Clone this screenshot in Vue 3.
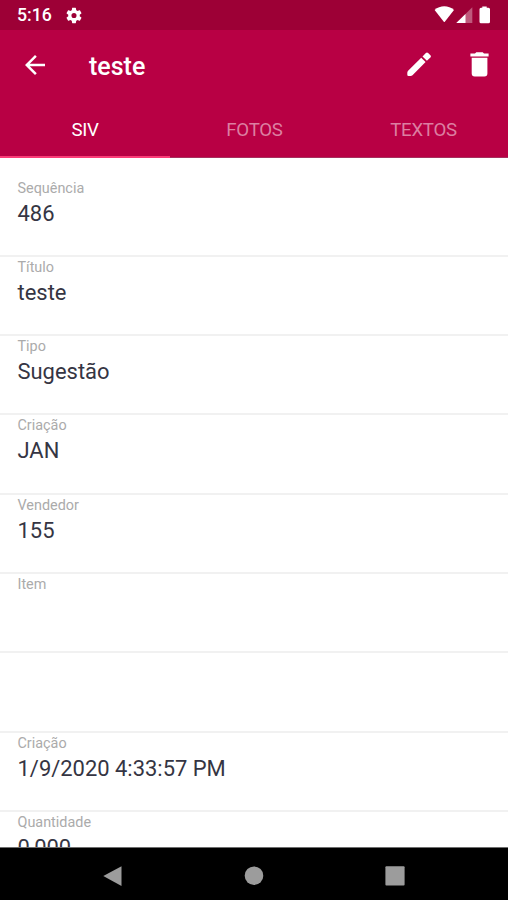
<script setup>
const tabs = [
  { name: 'SIV', active: true },
  { name: 'FOTOS', active: false },
  { name: 'TEXTOS', active: false },
]

const fields = [
  { label: 'Sequência', value: '486' },
  { label: 'Título', value: 'teste' },
  { label: 'Tipo', value: 'Sugestão' },
  { label: 'Criação', value: 'JAN' },
  { label: 'Vendedor', value: '155' },
  { label: 'Item', value: '' },
  { label: '', value: '' },
  { label: 'Criação', value: '1/9/2020 4:33:57 PM' },
  { label: 'Quantidade', value: '0,000' },
]
</script>

<template>
  <div class="screen">
    <div class="status">
      <span class="clock">5:16</span>
      <svg class="gear" viewBox="2 2 20 20">
        <path fill="#fff" d="M19.14 12.94c.04-.3.06-.61.06-.94 0-.32-.02-.64-.07-.94l2.03-1.58a.49.49 0 0 0 .12-.61l-1.92-3.32a.488.488 0 0 0-.59-.22l-2.39.96c-.5-.38-1.03-.7-1.62-.94l-.36-2.54a.484.484 0 0 0-.48-.41h-3.84c-.24 0-.43.17-.47.41l-.36 2.54c-.59.24-1.13.57-1.62.94l-2.39-.96c-.22-.08-.47 0-.59.22L2.74 8.87c-.12.21-.08.47.12.61l2.03 1.58c-.05.3-.09.63-.09.94s.02.64.07.94l-2.03 1.58a.49.49 0 0 0-.12.61l1.92 3.32c.12.22.37.29.59.22l2.39-.96c.5.38 1.03.7 1.62.94l.36 2.54c.05.24.24.41.48.41h3.84c.24 0 .44-.17.47-.41l.36-2.54c.59-.24 1.13-.56 1.62-.94l2.39.96c.22.08.47 0 .59-.22l1.92-3.32c.12-.22.07-.47-.12-.61l-2.01-1.58zM12 15.2a3.2 3.2 0 1 1 0-6.4 3.2 3.2 0 0 1 0 6.4z" />
      </svg>
      <svg class="signals" viewBox="0 0 58 18">
        <path fill="#fff" d="M.6 4.1C6-.9 14.500-.9 20 4.100L10.800 15.800q-.5.600-1 0Z" />
        <path fill="#fff" opacity=".35" d="M38.300 1.200V17H22.300Z" />
        <path fill="#fff" d="M31.500 8V17H22.300Z" />
        <path fill="#fff" d="M48.300 1.800V.500h4.400v1.300h1.800q1.500 0 1.500 1.500v12.500q0 1.500-1.500 1.500h-7.500q-1.500 0-1.500-1.500V3.300q0-1.500 1.500-1.500Z" />
      </svg>
    </div>

    <header class="bar">
      <svg class="back" viewBox="4 4 16 16">
        <path fill="#fff" d="M20 11H7.830l5.590-5.590L12 4l-8 8 8 8 1.410-1.410L7.830 13H20v-2z" />
      </svg>
      <h1 class="title">teste</h1>
      <svg class="edit" viewBox="0 0 24 24">
        <path fill="#fff" d="M.3 20.800Q.3 19.600 1.100 18.800L14.200 5.700L18.600 10.100L5.500 23.200Q4.700 24 3.500 24H1.500Q.3 24 .3 22.800ZM15.500 4.400L18.900 1Q20 0 21.100 1L23.400 3.300Q24.400 4.400 23.400 5.500L19.900 8.800Z" />
      </svg>
      <svg class="trash" viewBox="0 0 19 25">
        <path fill="#fff" d="M.4 1.600H5L6.300.3h6.400L14 1.600h4.600v2.800H.4ZM1.700 5.700h15.700v15.800q0 3-3 3H4.700q-3 0-3-3Z" />
      </svg>
    </header>

    <nav class="tabs">
      <div v-for="t in tabs" :key="t.name" class="tab" :class="{ active: t.active }">{{ t.name }}</div>
    </nav>

    <main class="list">
      <section v-for="(f, i) in fields" :key="i" class="field">
        <div class="label">{{ f.label }}</div>
        <div class="value">{{ f.value }}</div>
      </section>
    </main>

    <footer class="navbar">
      <svg viewBox="0 0 20 22"><path fill="#9c9c9c" d="M19.500 1.200V21L1.300 11.100Z" /></svg>
      <svg viewBox="0 0 20 22"><circle fill="#9c9c9c" cx="10" cy="10.700" r="9.300" /></svg>
      <svg viewBox="0 0 20 22"><rect fill="#9c9c9c" x=".4" y="1.300" width="19.200" height="19.200" rx="1" /></svg>
    </footer>
  </div>
</template>

<style>
body {
  margin: 0;
}
</style>

<style scoped>
.screen {
  width: 508px;
  height: 900px;
  display: flex;
  flex-direction: column;
  overflow: hidden;
  background: #fff;
  font-family: Roboto, "Liberation Sans", sans-serif;
}
.status {
  flex: none;
  box-sizing: border-box;
  height: 30px;
  padding: 0 16px 0 17px;
  display: flex;
  align-items: center;
  background: #9d0036;
}
.clock {
  width: 49px;
  font-size: 17.700px;
  line-height: 32px;
  font-weight: 500;
  color: #fff;
}
.gear {
  width: 16px;
  height: 17px;
}
.signals {
  width: 58px;
  height: 18px;
  margin-left: auto;
}
.bar {
  flex: none;
  box-sizing: border-box;
  height: 71px;
  padding: 0 19.500px 0 24.500px;
  display: flex;
  align-items: center;
  background: #b80044;
}
.back {
  width: 20px;
  height: 20px;
  margin-top: -2px;
}
.title {
  margin: 2px 0 0 44.500px;
  font-size: 25px;
  line-height: 34px;
  font-weight: 500;
  color: #fff;
}
.edit {
  width: 24px;
  height: 24px;
  margin: -3px 38.500px 0 auto;
}
.trash {
  width: 19px;
  height: 25px;
  margin-top: -3px;
}
.tabs {
  flex: none;
  display: grid;
  grid-template-columns: 170px 169px 169px;
  height: 57px;
  background: #b80044;
}
.tab {
  box-sizing: border-box;
  height: 57px;
  border-bottom: 1px solid #a6305e;
  text-align: center;
  font-size: 18.700px;
  letter-spacing: -0.300px;
  line-height: 58px;
  color: #dc7fa1;
}
.tab.active {
  color: #fff;
  border-bottom: 2px solid #fa3c78;
}
.list {
  flex: 1;
  min-height: 0;
  padding-top: 19.500px;
  overflow: hidden;
}
.field {
  box-sizing: border-box;
  height: 79.330px;
  padding: 2px 17.500px 0;
  border-bottom: 2px solid #f1f1f1;
}
.label {
  height: 18px;
  font-size: 14.400px;
  line-height: 18px;
  color: #ababab;
}
.value {
  font-size: 21.950px;
  line-height: 32px;
  color: #353543;
}
.navbar {
  flex: none;
  box-sizing: border-box;
  height: 53px;
  padding: 0 103px 0 102px;
  display: flex;
  align-items: center;
  justify-content: space-between;
  border-top: 1px solid #6e6e6e;
  background: #000;
}
.navbar svg {
  width: 20px;
  height: 22px;
  margin-top: 4px;
}
</style>
